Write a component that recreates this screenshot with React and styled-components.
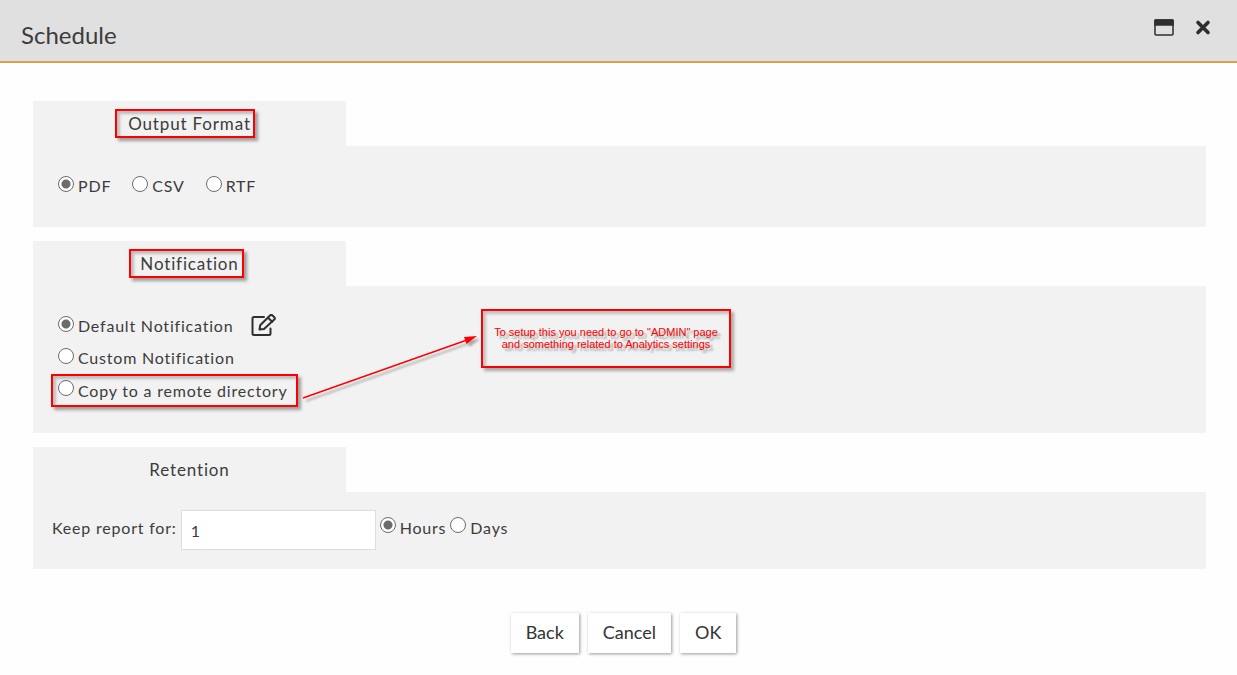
import React from "react";
import styled, { createGlobalStyle } from "styled-components";

const GlobalStyle = createGlobalStyle`
  * { box-sizing: border-box; }
  body {
    margin: 0;
    background: #fefefe;
    color: #3c3c3c;
    font-family: Lato, "Open Sans", sans-serif;
    font-size: 16px;
    line-height: 24px;
  }
`;

const Header = styled.header`
  display: flex;
  align-items: center;
  justify-content: space-between;
  height: 63px;
  padding: 8px 26px 0 21px;
  background: #e0e0e0;
  border-bottom: 2px solid #dda044;
`;

const Title = styled.h1`
  margin: 0;
  font-size: 24px;
  line-height: 32px;
  font-weight: 400;
`;

const HeaderActions = styled.div`
  display: flex;
  gap: 20px;
  padding-bottom: 14px;
`;

const IconButton = styled.button`
  display: flex;
  padding: 0;
  border: 0;
  background: none;
  color: #2e2e2e;
  cursor: pointer;
`;

const Main = styled.main`
  display: flex;
  flex-direction: column;
  gap: 14px;
  padding: 38px 31px 0 33px;
`;

const Panel = styled.section`
  display: flex;
  flex-direction: column;
`;

const Tab = styled.h2`
  width: 313px;
  margin: 0;
  padding: 11px 0 10px;
  background: #f2f2f2;
  font-size: 17px;
  line-height: 24px;
  font-weight: 400;
  letter-spacing: 0.05em;
  text-align: center;
`;

const PanelBody = styled.div`
  position: relative;
  display: flex;
  flex-direction: ${(p) => (p.$column ? "column" : "row")};
  align-items: flex-start;
  gap: ${(p) => p.$gap || 0}px;
  padding: ${(p) => p.$padding};
  background: #f2f2f2;
  letter-spacing: 0.05em;
`;

const Marked = styled.span`
  position: relative;
  &::after {
    content: "";
    position: absolute;
    inset: ${(p) => p.$inset};
    border: 2px solid #f00;
    box-shadow: 3px 3px 3px rgba(0, 0, 0, 0.35), inset 3px 3px 3px rgba(0, 0, 0, 0.22);
    pointer-events: none;
  }
`;

const Choice = styled.label`
  display: inline-flex;
  align-items: center;
  gap: 4px;
  height: 24px;
`;

const Radio = styled.input`
  appearance: none;
  flex: none;
  width: 16px;
  height: 16px;
  margin: 0 0 5px;
  border: 1px solid #6c6c6c;
  border-radius: 50%;
  background: #fff;
  &:checked {
    background: radial-gradient(circle, #6c6c6c 4px, #fff 5px);
  }
`;

const OptionRow = styled.div`
  display: flex;
  align-items: center;
  gap: 18px;
  height: 24px;
`;

const RetentionRow = styled.div`
  display: flex;
  align-items: center;
  gap: 4px;
`;

const FieldLabel = styled.label`
  padding-bottom: 4px;
`;

const UnitGroup = styled.div`
  display: flex;
  gap: 4px;
  padding-bottom: 4px;
`;

const NumberBox = styled.input`
  width: 195px;
  height: 40px;
  padding: 2px 9px 0;
  border: 1px solid #ddd;
  background: #fff;
  color: inherit;
  font: inherit;
`;

const Note = styled.div`
  position: absolute;
  left: 448px;
  top: 23px;
  width: 250px;
  padding: 15px 0 16px;
  border: 2px solid #f00;
  box-shadow: 3px 3px 3px rgba(0, 0, 0, 0.3), inset 3px 3px 3px rgba(0, 0, 0, 0.2);
  color: #f00;
  font-family: "Liberation Sans", Arial, sans-serif;
  font-size: 11px;
  line-height: 12px;
  letter-spacing: normal;
  text-align: center;
  text-shadow: 3px 3px 2px rgba(0, 0, 0, 0.35);
`;

const Arrow = styled.svg`
  position: absolute;
  left: 268px;
  top: 44px;
  overflow: visible;
  filter: drop-shadow(3px 3px 1px rgba(0, 0, 0, 0.3));
  pointer-events: none;
`;

const Footer = styled.footer`
  display: flex;
  justify-content: center;
  gap: 9px;
  padding: 44px 0 20px 10px;
`;

const Button = styled.button`
  height: 40px;
  padding: 0 15px 2px;
  border: 0;
  background: #fff;
  box-shadow: 1px 1px 3px rgba(0, 0, 0, 0.4);
  color: #333;
  font-family: inherit;
  font-size: 18px;
  line-height: 24px;
  cursor: pointer;
`;

function Option({ name, label, checked, marked }) {
  const content = (
    <Choice>
      <Radio type="radio" name={name} defaultChecked={checked} />
      {label}
    </Choice>
  );
  return marked ? <Marked $inset="-4px -10px -4px -7px">{content}</Marked> : content;
}

export default function App() {
  return (
    <>
      <GlobalStyle />
      <Header>
        <Title>Schedule</Title>
        <HeaderActions>
          <IconButton aria-label="Maximize">
            <svg width="22" height="20" viewBox="0 0 22 20">
              <rect x="2" y="2" width="18" height="15" rx="1" fill="none" stroke="currentColor" strokeWidth="1.5" />
              <path d="M1.200 2.200q0-1 1-1h17.600q1 0 1 1v5.500H1.200z" fill="currentColor" />
            </svg>
          </IconButton>
          <IconButton aria-label="Close">
            <svg width="16" height="20" viewBox="0 0 16 20">
              <path d="M3 4.500l10 10M13 4.500l-10 10" stroke="currentColor" strokeWidth="3.600" strokeLinecap="round" />
            </svg>
          </IconButton>
        </HeaderActions>
      </Header>
      <Main>
        <Panel>
          <Tab>
            <Marked $inset="-4px -4px -4px -13px">Output Format</Marked>
          </Tab>
          <PanelBody $gap={21} $padding="28px 25px 29px">
            <Option name="format" label="PDF" checked />
            <Option name="format" label="CSV" />
            <Option name="format" label="RTF" />
          </PanelBody>
        </Panel>
        <Panel>
          <Tab>
            <Marked $inset="-4px -5px -4px -11px">Notification</Marked>
          </Tab>
          <PanelBody $column $gap={8} $padding="28px 25px 30px">
            <OptionRow>
              <Option name="notification" label="Default Notification" checked />
              <IconButton aria-label="Edit default notification">
                <svg width="26" height="24" viewBox="0 0 26 24" fill="none" stroke="currentColor" strokeWidth="2" strokeLinejoin="round" strokeLinecap="round">
                  <path d="M13 3H3Q1.500 3 1.500 4.500v15q0 1.500 1.500 1.500h15q1.500 0 1.500-1.500v-5" />
                  <path d="M8.500 15.500l.7-4.200L19 1.500q1.200-1.200 2.500 0l1.800 1.700q1.200 1.200 0 2.400L13 15z" />
                  <path d="M17 3.700l4.200 4" />
                </svg>
              </IconButton>
            </OptionRow>
            <Option name="notification" label="Custom Notification" />
            <Option name="notification" label="Copy to a remote directory" marked />
            <Arrow width="178" height="70" viewBox="0 0 178 70" aria-hidden="true">
              <path d="M2 68L166 10" stroke="#f00" strokeWidth="1.500" />
              <path d="M176 6l-10.500 8-2.500-7z" fill="#f00" />
            </Arrow>
            <Note>
              To setup this you need to go to "ADMIN" page
              <br />
              and something related to Analytics settings
            </Note>
          </PanelBody>
        </Panel>
        <Panel>
          <Tab>Retention</Tab>
          <PanelBody $padding="18px 19px 19px">
            <RetentionRow>
              <FieldLabel htmlFor="keep">Keep report for:</FieldLabel>
              <NumberBox id="keep" type="text" defaultValue="1" />
              <UnitGroup>
                <Option name="unit" label="Hours" checked />
                <Option name="unit" label="Days" />
              </UnitGroup>
            </RetentionRow>
          </PanelBody>
        </Panel>
      </Main>
      <Footer>
        <Button>Back</Button>
        <Button>Cancel</Button>
        <Button>OK</Button>
      </Footer>
    </>
  );
}
